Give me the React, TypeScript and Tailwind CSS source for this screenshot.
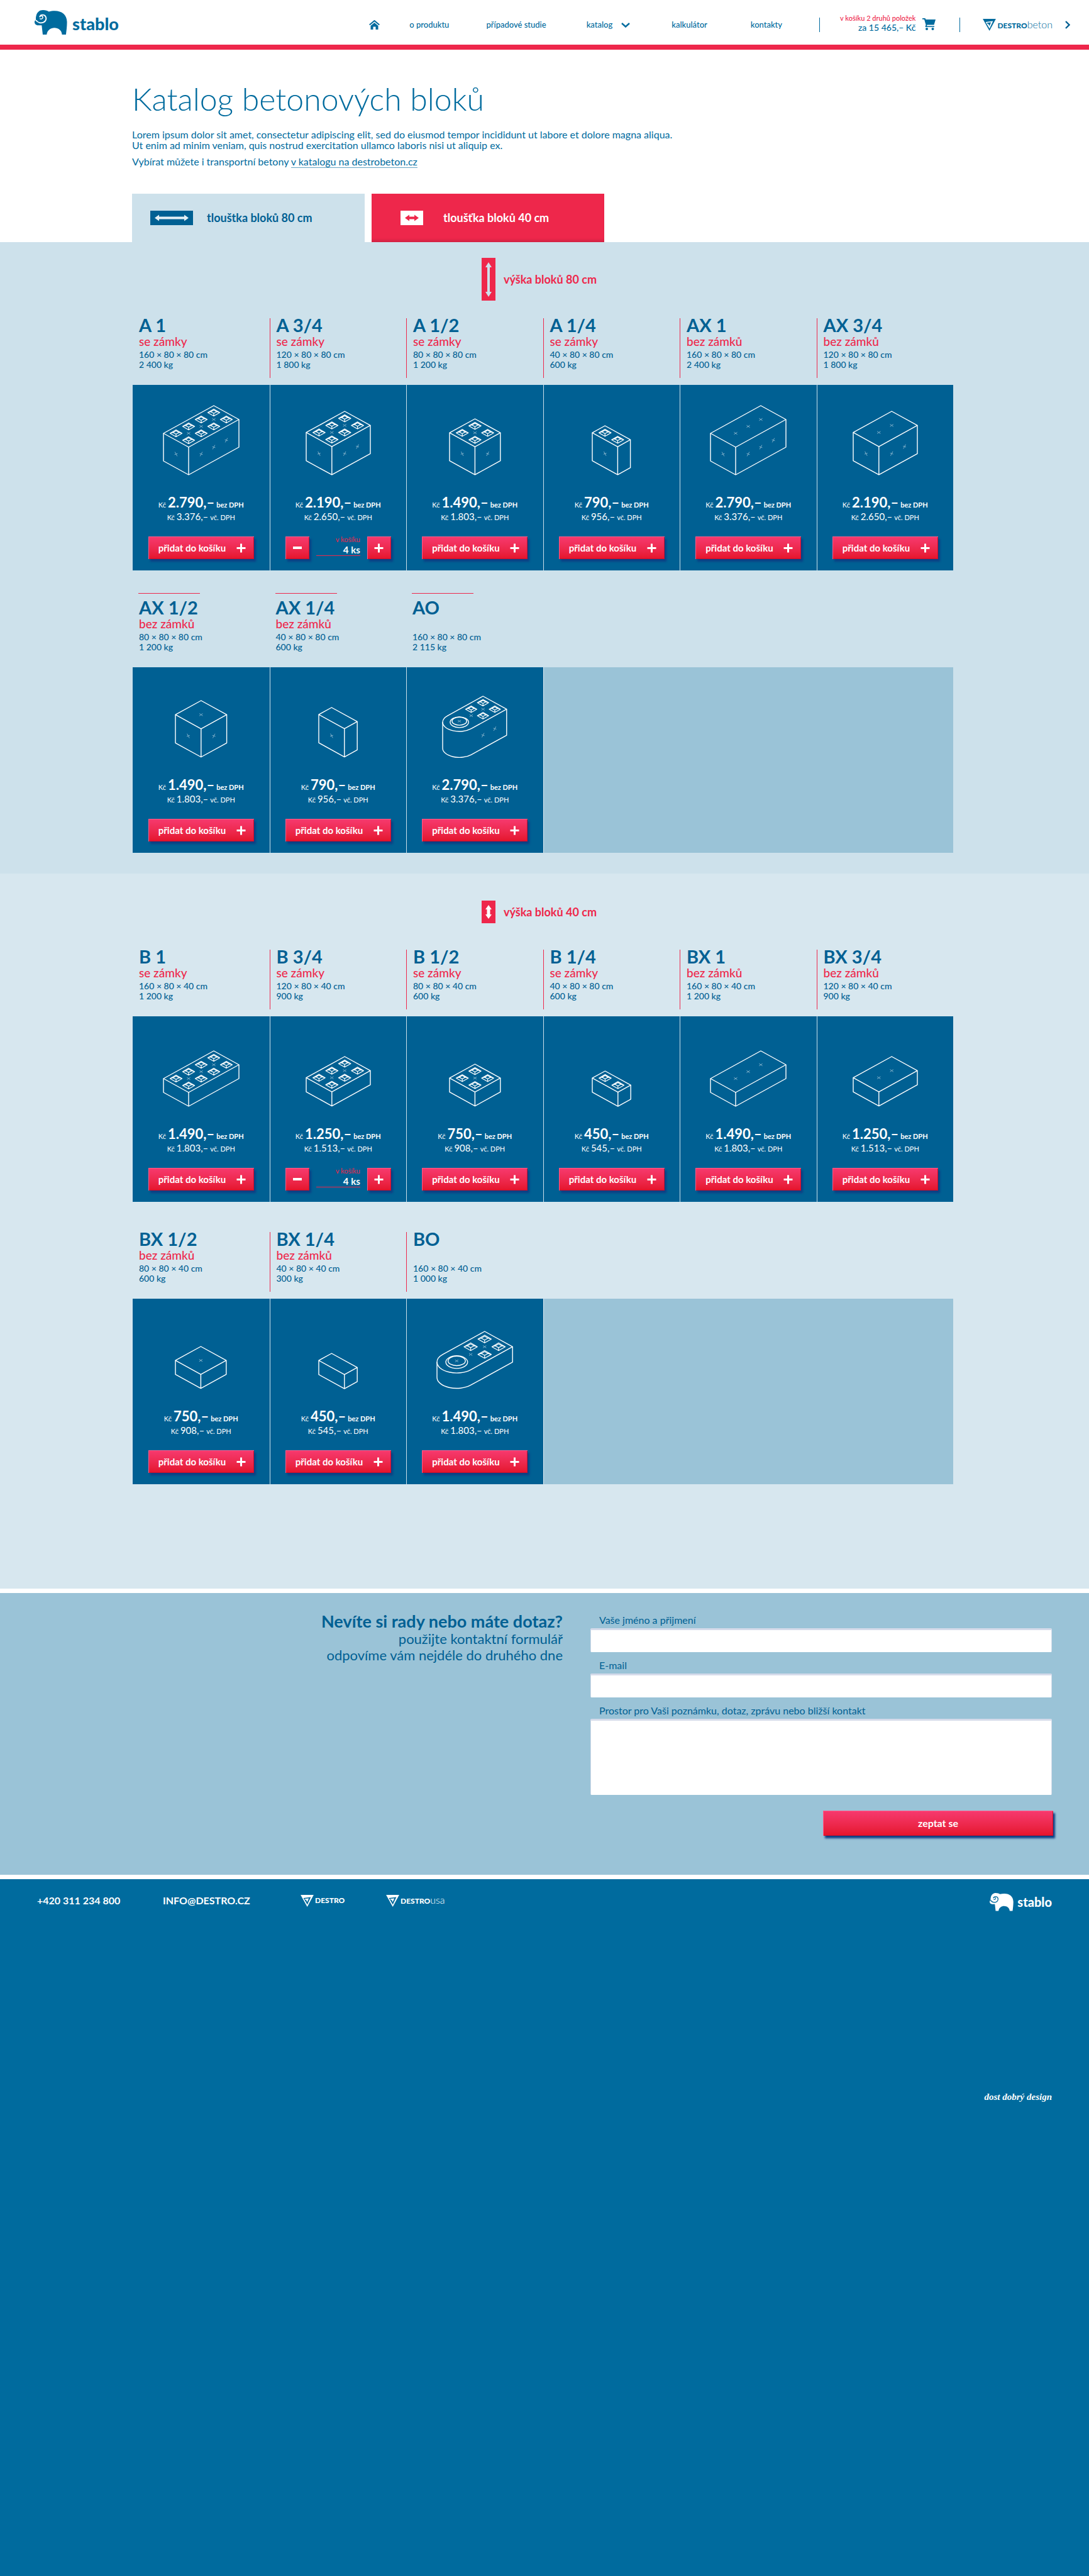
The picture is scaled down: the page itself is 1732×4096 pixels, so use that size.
import { useState } from "react";

type Product = {
  name: string;
  kind?: string;
  size: string;
  weight: string;
  price: string;
  vat: string;
  length: number;
  depth: number;
  studs?: boolean;
  round?: boolean;
  scale?: number;
  inCart?: boolean;
};

const WITH = "se zámky";
const WITHOUT = "bez zámků";

const tallFirst: Product[] = [
  { name: "A 1", kind: WITH, size: "160 × 80 × 80 cm", weight: "2 400 kg", price: "2.790,–", vat: "3.376,–", length: 2, depth: 1, studs: true },
  { name: "A 3/4", kind: WITH, size: "120 × 80 × 80 cm", weight: "1 800 kg", price: "2.190,–", vat: "2.650,–", length: 1.5, depth: 1, studs: true, inCart: true, scale: 1.02 },
  { name: "A 1/2", kind: WITH, size: "80 × 80 × 80 cm", weight: "1 200 kg", price: "1.490,–", vat: "1.803,–", length: 1, depth: 1, studs: true, scale: 1.01 },
  { name: "A 1/4", kind: WITH, size: "40 × 80 × 80 cm", weight: "600 kg", price: "790,–", vat: "956,–", length: 0.5, depth: 1, studs: true, scale: 1.01 },
  { name: "AX 1", kind: WITHOUT, size: "160 × 80 × 80 cm", weight: "2 400 kg", price: "2.790,–", vat: "3.376,–", length: 2, depth: 1 },
  { name: "AX 3/4", kind: WITHOUT, size: "120 × 80 × 80 cm", weight: "1 800 kg", price: "2.190,–", vat: "2.650,–", length: 1.5, depth: 1, scale: 1.02 },
];

const tallSecond: Product[] = [
  { name: "AX 1/2", kind: WITHOUT, size: "80 × 80 × 80 cm", weight: "1 200 kg", price: "1.490,–", vat: "1.803,–", length: 1, depth: 1, scale: 1.02 },
  { name: "AX 1/4", kind: WITHOUT, size: "40 × 80 × 80 cm", weight: "600 kg", price: "790,–", vat: "956,–", length: 0.5, depth: 1, scale: 1.02 },
  { name: "AO", size: "160 × 80 × 80 cm", weight: "2 115 kg", price: "2.790,–", vat: "3.376,–", length: 2, depth: 1, round: true, scale: 0.94 },
];

const lowFirst: Product[] = [
  { name: "B 1", kind: WITH, size: "160 × 80 × 40 cm", weight: "1 200 kg", price: "1.490,–", vat: "1.803,–", length: 2, depth: 0.5, studs: true },
  { name: "B 3/4", kind: WITH, size: "120 × 80 × 40 cm", weight: "900 kg", price: "1.250,–", vat: "1.513,–", length: 1.5, depth: 0.5, studs: true, inCart: true, scale: 1.02 },
  { name: "B 1/2", kind: WITH, size: "80 × 80 × 40 cm", weight: "600 kg", price: "750,–", vat: "908,–", length: 1, depth: 0.5, studs: true, scale: 1.01 },
  { name: "B 1/4", kind: WITH, size: "40 × 80 × 80 cm", weight: "600 kg", price: "450,–", vat: "545,–", length: 0.5, depth: 0.5, studs: true, scale: 1.02 },
  { name: "BX 1", kind: WITHOUT, size: "160 × 80 × 40 cm", weight: "1 200 kg", price: "1.490,–", vat: "1.803,–", length: 2, depth: 0.5 },
  { name: "BX 3/4", kind: WITHOUT, size: "120 × 80 × 40 cm", weight: "900 kg", price: "1.250,–", vat: "1.513,–", length: 1.5, depth: 0.5, scale: 1.02 },
];

const lowSecond: Product[] = [
  { name: "BX 1/2", kind: WITHOUT, size: "80 × 80 × 40 cm", weight: "600 kg", price: "750,–", vat: "908,–", length: 1, depth: 0.5, scale: 1.01 },
  { name: "BX 1/4", kind: WITHOUT, size: "40 × 80 × 40 cm", weight: "300 kg", price: "450,–", vat: "545,–", length: 0.5, depth: 0.5, scale: 1.02 },
  { name: "BO", size: "160 × 80 × 40 cm", weight: "1 000 kg", price: "1.490,–", vat: "1.803,–", length: 2, depth: 0.5, round: true, scale: 1.11 },
];

/* Isometric drawing of one block; lengths are in multiples of 80 cm. */
function Block({ p }: { p: Product }) {
  const s = p.scale ?? 1;
  const U = 40 * s;
  const V = 22 * s;
  const H = 44 * s * p.depth;
  const L = p.length;
  const pad = 1;
  const rx = U * Math.SQRT1_2;
  const ry = V * Math.SQRT1_2;
  const left = p.round ? (L - 1) * U + rx : L * U;
  const bottom = p.round ? L * V + ry + H : (L + 1) * V + H;
  const w = left + U + pad * 2;
  const h = bottom + pad * 2;
  const tx = left + pad;
  const pt = (a: number, b: number, z = 0): [number, number] => [tx + (b - a) * U, pad + (a + b) * V + z];
  const xy = (a: number, b: number, z = 0) => pt(a, b, z).join(" ");

  const studs: [number, number][] = [];
  if (p.studs || p.round) {
    const end = p.round ? 1 : L;
    for (let a = 0.25; a < end; a += 0.5) {
      for (const b of [0.25, 0.75]) studs.push([a, b]);
    }
  }
  const steps: number[] = [];
  for (let a = 0.5; a < L - (p.round ? 0.75 : 0.25); a += 0.5) steps.push(a);

  const [cx, cy] = pt(L - 0.5, 0.5);
  const full = p.depth === 1;

  return (
    <svg width={w} height={h} viewBox={`0 0 ${w} ${h}`} fill="none" stroke="#fff" strokeWidth="1.4" strokeLinejoin="round" aria-hidden="true">
      {p.round ? (
        <>
          <path d={`M${xy(0, 1)} L${xy(0, 0)} L${xy(L - 0.5, 0)} A${rx} ${ry} 0 0 0 ${cx - rx} ${cy} A${rx} ${ry} 0 0 0 ${xy(L - 0.5, 1)} Z`} />
          <path d={`M${cx - rx} ${cy} V${cy + H} A${rx} ${ry} 0 0 0 ${xy(L - 0.5, 1, H)} L${xy(0, 1, H)} V${pt(0, 1)[1]}`} />
          <ellipse cx={cx} cy={cy} rx={U * 0.39} ry={V * 0.41} />
          <ellipse cx={cx} cy={cy - V * 0.08} rx={U * 0.31} ry={V * 0.31} />
        </>
      ) : (
        <>
          <path d={`M${xy(0, 0)} L${xy(0, 1)} L${xy(L, 1)} L${xy(L, 0)} Z`} />
          <path d={`M${xy(L, 0)} L${xy(L, 0, H)} L${xy(L, 1, H)} L${xy(0, 1, H)} L${xy(0, 1)} M${xy(L, 1)} L${xy(L, 1, H)}`} />
        </>
      )}
      {studs.map(([a, b]) => {
        const [x, y] = pt(a, b);
        const ow = U * 0.24;
        const oh = V * 0.25;
        const iw = U * 0.12;
        const ih = V * 0.12;
        const iy = y - V * 0.06;
        return (
          <path
            key={`${a}-${b}`}
            strokeWidth="1.2"
            d={`M${x - ow} ${y} L${x} ${y - oh} L${x + ow} ${y} L${x} ${y + oh} Z M${x - iw} ${iy} L${x} ${iy - ih} L${x + iw} ${iy} L${x} ${iy + ih} Z M${x - ow} ${y} L${x - iw} ${iy} M${x + ow} ${y} L${x + iw} ${iy} M${x} ${y + oh} L${x} ${iy + ih}`}
          />
        );
      })}
      <g strokeWidth="1" opacity="0.5">
        {steps.map((a) => {
          const [x, y] = pt(a, 0.5);
          const [sx, sy] = pt(a, 1, H / 2);
          return (
            <g key={a}>
              <path d={`M${x - 2.6} ${y - 1.8} l5.2 3.6 m0 -3.6 l-5.2 3.6`} />
              {full && <path d={`M${sx - 2.4} ${sy - 0.8} l4.8 1.6 M${sx + 1.8} ${sy - 3.4} l-3.6 6.8`} />}
            </g>
          );
        })}
        {p.round && <path d={`M${cx - 2.6} ${cy - V * 0.08 - 1.8} l5.2 3.6 m0 -3.6 l-5.2 3.6`} />}
        {full && !p.round && (
          <path d={`M${pt(L, 0.5)[0] - 2.4} ${pt(L, 0.5)[1] + H / 2 + 0.8} l4.8 -1.6 M${pt(L, 0.5)[0] - 1.8} ${pt(L, 0.5)[1] + H / 2 - 3.4} l3.6 6.8`} />
        )}
      </g>
    </svg>
  );
}

const redButton =
  "cursor-pointer bg-linear-to-b from-[#f7396f] to-[#e5132a] font-bold text-white shadow-[3px_4px_3px_#0d3f84,inset_1px_1px_0_#ff5c88,inset_-1px_-1px_0_#c8102c]";

function Plus() {
  return (
    <svg width="15" height="15" viewBox="0 0 15 15" aria-hidden="true">
      <path d="M7.5 0.5v14M0.5 7.5h14" stroke="#fff" strokeWidth="3" />
    </svg>
  );
}

function Stepper({ name }: { name: string }) {
  const [count, setCount] = useState(4);
  return (
    <div className="flex h-9 w-[168px] items-start justify-between">
      <button type="button" aria-label={`Ubrat ${name}`} onClick={() => setCount(Math.max(0, count - 1))} className={`${redButton} flex h-9 w-[38px] items-center justify-center`}>
        <svg width="14" height="4" viewBox="0 0 14 4" aria-hidden="true">
          <path d="M0 2h14" stroke="#fff" strokeWidth="4" />
        </svg>
      </button>
      <div className="h-[31px] w-[70px] border-b border-[#ee274b] text-right">
        <div className="text-[11px] leading-[10px] text-[#ee274b]">v košíku</div>
        <div className="mt-0.5 text-[15px] leading-[18px] font-bold text-white">{count} ks</div>
      </div>
      <button type="button" aria-label={`Přidat ${name}`} onClick={() => setCount(count + 1)} className={`${redButton} flex h-9 w-[38px] items-center justify-center`}>
        <Plus />
      </button>
    </div>
  );
}

function Card({ p, first }: { p: Product; first: boolean }) {
  return (
    <div className={`flex h-[295px] flex-col items-center bg-[#006093] text-white ${first ? "" : "border-l border-[#cde1eb]"}`}>
      <div className="flex h-36 items-end">
        <Block p={p} />
      </div>
      <p className="mt-[31px] text-[22px] leading-6 font-bold whitespace-nowrap">
        <span className="text-[11px] leading-none font-normal">Kč</span>
        <span className="mx-[3px]">{p.price}</span>
        <span className="text-[11px] leading-none">bez DPH</span>
      </p>
      <p className="mt-px text-[15px] leading-[18px] whitespace-nowrap">
        <span className="text-[11px] leading-none">Kč</span>
        <span className="mx-[3px]">{p.vat}</span>
        <span className="text-[11px] leading-none">vč. DPH</span>
      </p>
      <div className="mt-[23px]">
        {p.inCart ? (
          <Stepper name={p.name} />
        ) : (
          <button type="button" className={`${redButton} flex h-9 w-[168px] items-center justify-between pr-[13px] pl-4 text-[15px]`}>
            přidat do košíku
            <Plus />
          </button>
        )}
      </div>
    </div>
  );
}

function Row({ items, topLines }: { items: Product[]; topLines?: boolean }) {
  return (
    <div>
      <div className="grid h-[106px] grid-cols-6">
        {items.map((p, i) => (
          <div key={p.name} className={`relative h-[95px] pl-[10px] text-[#006093] ${i > 0 && !topLines ? "border-l border-[#ee274b]" : ""}`}>
            {topLines && <span className="absolute -top-3 left-[9px] h-px w-[98px] bg-[#ee274b]" />}
            <h3 className="text-[29px] leading-[22px] font-bold">{p.name}</h3>
            <p className="mt-1 h-[22px] text-[19px] leading-[22px] font-medium text-[#ee274b]">{p.kind}</p>
            <p className="mt-0.5 text-[14px] leading-4 font-medium">{p.size}</p>
            <p className="text-[14px] leading-4 font-medium">{p.weight}</p>
          </div>
        ))}
      </div>
      <div className="grid grid-cols-6">
        {items.map((p, i) => (
          <Card key={p.name} p={p} first={i === 0} />
        ))}
        {items.length < 6 && <div className="col-span-3 border-l border-[#e3eff5] bg-[#9ac3d7]" />}
      </div>
    </div>
  );
}

function Mammoth({ width, cut }: { width: number; cut: string }) {
  return (
    <svg width={width} height={(width * 93) / 124} viewBox="0 0 124 93" aria-hidden="true">
      <path
        fill="currentColor"
        d="M32 0C42 0 49 3 54 6 61 4 68 3 76 3 104 3 122 18 123 45 123 62 121 78 119 93H104C102 60 50 58 46 93H31L27 58H13C5 58 0 52 0 46 0 43 1 40 3 38 4 41 6 43 8 44 4 37 4 31 6 22 9 8 19 0 32 0Z"
      />
      <path fill="none" stroke={cut} strokeWidth="4.5" strokeLinecap="round" d="M7 40C13 48 24 50 33 47 43 43 46 32 42 25 37 16 23 16 20 25" />
      <path fill="none" stroke={cut} strokeWidth="3.5" strokeLinecap="round" d="M20 25C22 20 32 21 31 29 30 33 25 35 21 33" />
    </svg>
  );
}

function DestroMark({ cut }: { cut: string }) {
  return (
    <svg width="21" height="19" viewBox="0 0 23 21" aria-hidden="true">
      <path fill="currentColor" d="M0 0H23L11.7 21Z" />
      <path fill={cut} d="M5 5.5 18 4 11.8 17Z" />
      <path fill="currentColor" d="M7.2 7 14.5 6.2 11.6 12.5 9.6 8.5 8 8.6Z" />
    </svg>
  );
}

function DestroLogo({ suffix, cut }: { suffix?: string; cut: string }) {
  return (
    <span className="flex items-center gap-0.5">
      <DestroMark cut={cut} />
      <span className="flex items-baseline leading-5">
        <span className="text-[12px] font-black">DESTRO</span>
        {suffix && <span className="text-[16px] font-light">{suffix}</span>}
      </span>
    </span>
  );
}

function SectionTitle({ tall }: { tall?: boolean }) {
  return (
    <h2 className="flex items-center justify-center gap-[13px] pr-3 text-[18px] font-bold text-[#ee274b]">
      {tall ? (
        <svg width="22" height="68" viewBox="0 0 22 68" aria-hidden="true">
          <path fill="#ee274b" d="M0 0h22v68H0z" />
          <path fill="#cde1eb" d="M11 7 16 15H13V54H16L11 62 6 54H9V15H6Z" />
        </svg>
      ) : (
        <svg width="22" height="36" viewBox="0 0 22 36" aria-hidden="true">
          <path fill="#ee274b" d="M0 0h22v36H0z" />
          <path fill="#fff" d="M11 7 16 14H13.5V22H16L11 29 6 22H8.5V14H6Z" />
        </svg>
      )}
      výška bloků {tall ? "80" : "40"} cm
    </h2>
  );
}

const field =
  "block w-full rounded-[2px] border-x border-t-[3px] border-b border-[#d5dbea] border-b-white bg-white px-3 text-[16px] outline-none";

export default function App() {
  return (
    <div className="flex min-h-screen flex-col bg-white font-['Lato',sans-serif] text-[#006b9e]">
      <header className="flex h-[79px] items-center border-b-8 border-[#ee274b] pr-[30px] pl-[55px]">
        <a href="#" className="flex items-center gap-2" aria-label="stablo">
          <Mammoth width={52} cut="#fff" />
          <span className="pt-1 text-[27px] leading-8 font-black">stablo</span>
        </a>
        <nav className="ml-auto flex items-center pt-2 text-[13px] font-medium whitespace-nowrap">
          <a href="#" aria-label="Domů">
            <svg width="17" height="15" viewBox="0 0 17 15" aria-hidden="true">
              <path fill="none" stroke="currentColor" strokeWidth="2" d="M0.7 7.5 8.5 1 16.3 7.5" />
              <path fill="currentColor" d="M8.5 4 14.5 9V15H10.5V10.5H6.5V15H2.5V9Z" />
            </svg>
          </a>
          <a href="#" className="ml-[47px]">o produktu</a>
          <a href="#" className="ml-[59px]">případové studie</a>
          <a href="#" className="ml-16 flex items-center gap-[14px]">
            katalog
            <svg width="14" height="8" viewBox="0 0 14 8" aria-hidden="true">
              <path fill="none" stroke="currentColor" strokeWidth="2.4" d="M1 1 7 6.5 13 1" />
            </svg>
          </a>
          <a href="#" className="ml-[66px]">kalkulátor</a>
          <a href="#" className="ml-[69px]">kontakty</a>
        </nav>
        <span className="mt-2 ml-[59px] h-[23px] w-px bg-current" />
        <a href="#" className="ml-8 flex items-center gap-[11px] text-right whitespace-nowrap">
          <span className="pt-0.5">
            <span className="block text-[11px] leading-[14px] font-medium text-[#ee274b]">v košíku 2 druhů položek</span>
            <span className="block text-[14px] leading-4 font-medium">za 15 465,– Kč</span>
          </span>
          <svg className="mt-[6px]" width="21" height="19" viewBox="0 0 21 19" aria-hidden="true">
            <path fill="currentColor" d="M0 0H4.5L5.5 2H21L18.5 10.5H7.5L7 12.5H19V14H4.5L5.5 10.5 3 1.8H0Z" />
            <circle cx="7" cy="17" r="2" fill="currentColor" />
            <circle cx="16.5" cy="17" r="2" fill="currentColor" />
          </svg>
        </a>
        <span className="mt-2 ml-[38px] h-[23px] w-px bg-current" />
        <a href="#" className="mt-2 ml-9 flex items-center gap-5" aria-label="DESTRO beton">
          <DestroLogo suffix="beton" cut="#fff" />
          <svg width="8" height="13" viewBox="0 0 8 13" aria-hidden="true">
            <path fill="none" stroke="#006093" strokeWidth="2.4" d="M1 1 6.5 6.5 1 12" />
          </svg>
        </a>
      </header>

      <main>
        <div className="pt-[54px] pr-[216px] pl-[210px]">
          <h1 className="text-[50px] leading-[48px] font-light">Katalog betonových bloků</h1>
          <p className="mt-6 text-[16px] leading-[17px]">
            Lorem ipsum dolor sit amet, consectetur adipiscing elit, sed do eiusmod tempor incididunt ut labore et dolore magna aliqua.
            <br />
            Ut enim ad minim veniam, quis nostrud exercitation ullamco laboris nisi ut aliquip ex.
          </p>
          <p className="mt-[9px] text-[16px] leading-[18px]">
            Vybírat můžete i transportní betony{" "}
            <a href="#" className="border-b border-[#66a6c5]">v katalogu na destrobeton.cz</a>
          </p>
          <div className="mt-[42px] flex gap-[11px] text-[18px] font-bold">
            <button type="button" className="flex h-[77px] w-[370px] cursor-pointer items-center gap-[22px] bg-[#cde1eb] pl-[29px] text-[#006093]">
              <svg width="68" height="23" viewBox="0 0 68 23" aria-hidden="true">
                <path fill="#006093" d="M0 0h68v23H0z" />
                <path fill="#e3eff5" d="M7 11.5 14 6.5V9.5H54V6.5L61 11.5 54 16.5V13.5H14V16.5Z" />
              </svg>
              tlouštka bloků 80 cm
            </button>
            <button type="button" className="flex h-[77px] w-[370px] cursor-pointer items-center gap-8 bg-[#ee274b] pl-[46px] text-white shadow-[inset_0_-5px_4px_-2px_#cf2243]">
              <svg width="36" height="23" viewBox="0 0 36 23" aria-hidden="true">
                <path fill="#fff" d="M0 0h36v23H0z" />
                <path fill="#ee274b" d="M7 11.5 14 6.5V9.5H22V6.5L29 11.5 22 16.5V13.5H14V16.5Z" />
              </svg>
              tloušťka bloků 40 cm
            </button>
          </div>
        </div>

        <section className="bg-[#cde1eb] pt-[25px] pr-[216px] pb-[33px] pl-[211px]">
          <SectionTitle tall />
          <div className="mt-7 flex flex-col gap-12">
            <Row items={tallFirst} />
            <Row items={tallSecond} topLines />
          </div>
        </section>

        <section className="bg-[#d7e7ef] pt-[43px] pr-[216px] pb-[166px] pl-[211px]">
          <SectionTitle />
          <div className="mt-[42px] flex flex-col gap-12">
            <Row items={lowFirst} />
            <Row items={lowSecond} />
          </div>
        </section>

        <section className="flex items-start gap-[44px] border-y-[7px] border-white bg-[#9ac3d7] pt-[34px] pr-[59px] pb-[62px] text-[#006093]">
          <div className="-mt-1 flex-1 text-right text-[22px] leading-[26px]">
            <h2 className="text-[27px] leading-[30px] font-bold">Nevíte si rady nebo máte dotaz?</h2>
            <p>použijte kontaktní formulář</p>
            <p>odpovíme vám nejdéle do druhého dne</p>
          </div>
          <form className="w-[734px] text-[16px]">
            <label htmlFor="name" className="mb-1 block pl-[14px] leading-[18px]">Vaše jméno a přijmení</label>
            <input id="name" type="text" className={`${field} h-[38px]`} />
            <label htmlFor="email" className="mt-3 mb-1 block pl-[14px] leading-[18px]">E-mail</label>
            <input id="email" type="email" className={`${field} h-[38px]`} />
            <label htmlFor="note" className="mt-3 mb-1 block pl-[14px] leading-[18px]">
              Prostor pro Vaši poznámku, dotaz, zprávu nebo bližší kontakt
            </label>
            <textarea id="note" className={`${field} h-[121px] resize-none`} />
            <div className="-mr-0.5 flex justify-end pt-[25px]">
              <button type="button" className={`${redButton} h-10 w-[366px]`}>zeptat se</button>
            </div>
          </form>
        </section>
      </main>

      <footer className="flex flex-1 items-start justify-between bg-[#006b9e] pt-[22px] pr-[59px] pl-[59px] text-white">
        <div className="flex items-center text-[16px] font-bold">
          <a href="#" className="w-[200px]">+420 311 234 800</a>
          <a href="#" className="w-[219px]">INFO@DESTRO.CZ</a>
          <a href="#" className="w-[136px]"><DestroLogo cut="#006b9e" /></a>
          <a href="#"><DestroLogo suffix="usa" cut="#006b9e" /></a>
        </div>
        <div className="flex flex-col items-end">
          <a href="#" className="flex items-center gap-1.5">
            <Mammoth width={38} cut="#006b9e" />
            <span className="text-[20px] leading-6 font-black">stablo</span>
          </a>
          <p className="mt-[284px] font-['Liberation_Serif',serif] text-[15px] font-bold italic">dost dobrý design</p>
        </div>
      </footer>
    </div>
  );
}
